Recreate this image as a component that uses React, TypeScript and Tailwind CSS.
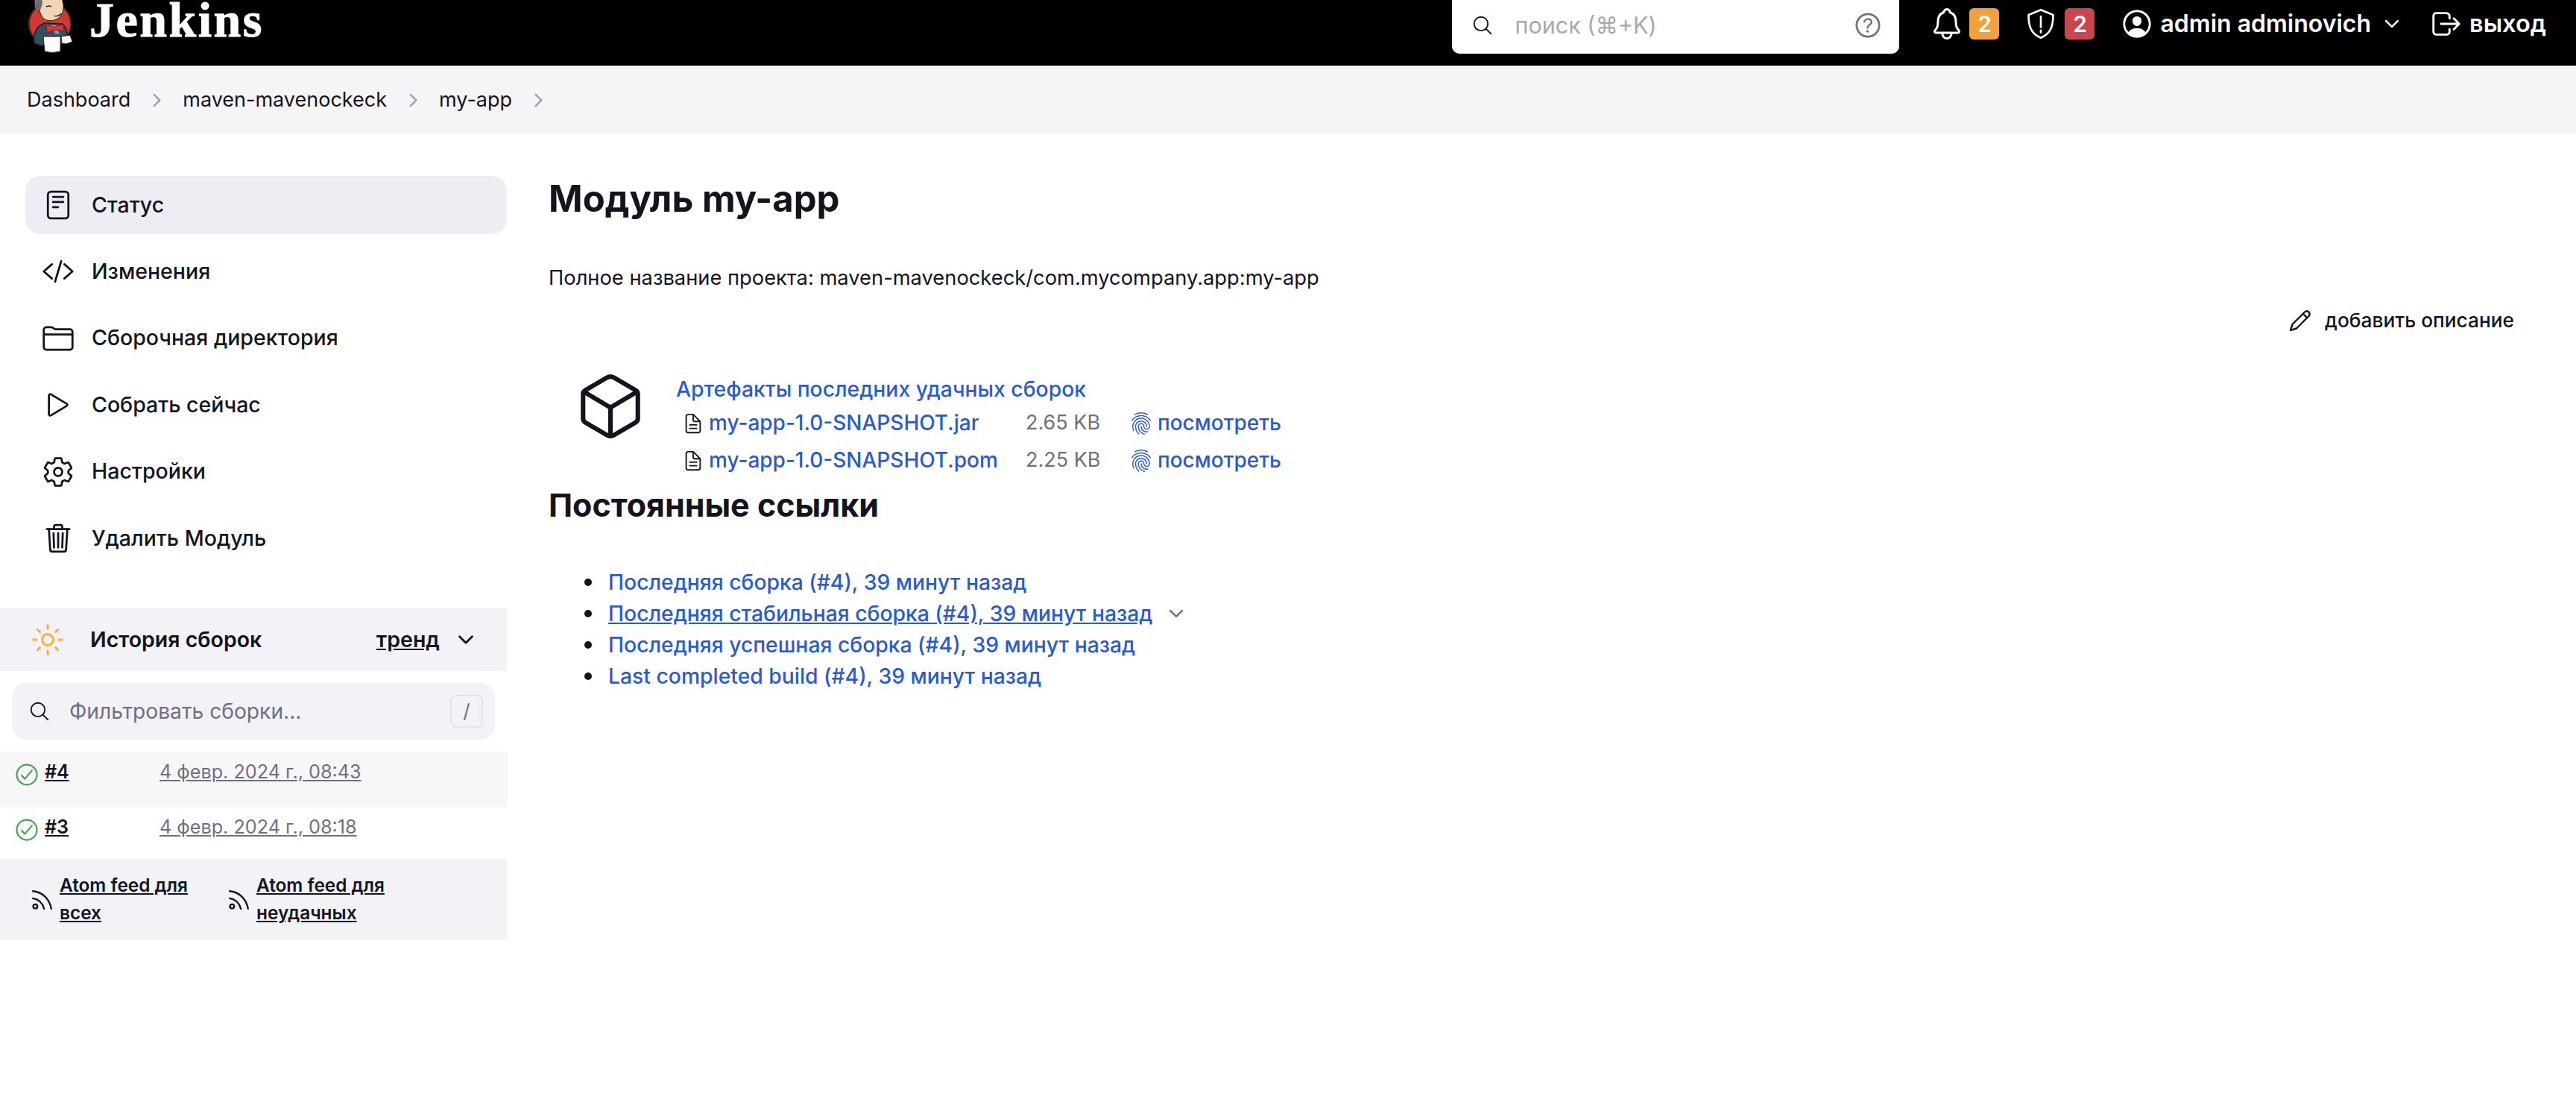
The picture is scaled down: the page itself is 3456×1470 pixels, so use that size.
import type { ReactNode } from 'react'
import {
  IoChevronDown,
  IoChevronForward,
  IoCheckmarkCircleOutline,
  IoCodeSlashOutline,
  IoCubeOutline,
  IoDocumentTextOutline,
  IoFingerPrintOutline,
  IoFolderOutline,
  IoHelpCircleOutline,
  IoLogOutOutline,
  IoNotificationsOutline,
  IoPersonCircleOutline,
  IoPlayOutline,
  IoReaderOutline,
  IoSearchOutline,
  IoSettingsOutline,
  IoSunnyOutline,
  IoTrashOutline,
} from 'react-icons/io5'

function JenkinsLogo() {
  return (
    <svg viewBox="0 0 70 88" className="h-[88px] w-[70px] shrink-0">
      <circle cx="33" cy="32" r="28" fill="#d33833" stroke="#49312d" strokeWidth="2" />
      <path d="M12 58c-2-14 4-24 14-27l24 1c6 6 7 14 6 21l-10 8H20z" fill="#335061" stroke="#231f20" strokeWidth="1.5" />
      <path d="M33 34l9 12 5-11z" fill="#fff" />
      <path d="M40 46l-2-6 5-1 3 6z" fill="#6d9dc5" />
      <path d="M13 6c-2-6 2-10 6-12h26c8 6 8 22 1 29-5 5-14 6-20 3-4-3-6-8-7-12-4 0-6-4-6-8z" fill="#f0d6b7" stroke="#231f20" strokeWidth="1" />
      <path d="M13 10c-2-8 3-14 8-16l2 10-3 10c-3 0-6-1-7-4z" fill="#6d6b6d" />
      <path d="M28 9q4-2 7 0M38 21q6 2 10-3" fill="none" stroke="#231f20" strokeWidth="1.3" />
      <path d="M28 33l11 3 12-3 1 9-12-2-11 4z" fill="#d33833" stroke="#7a1f1c" strokeWidth="1" />
      <path d="M24 49h23v20q-11 3-21 0z" fill="#fff" stroke="#231f20" strokeWidth="1" />
      <path d="M48 49l12-2 3 9-8 3-6-1z" fill="#f4f4f4" stroke="#231f20" strokeWidth="1" />
    </svg>
  )
}

function ShieldAlertIcon() {
  return (
    <svg viewBox="0 0 40 40" className="h-[44px] w-[44px]" fill="none" stroke="#fff" strokeWidth="2.4">
      <path d="M20 3l15 6c0 14-3 23-15 28C8 32 5 23 5 9z" strokeLinejoin="round" />
      <path d="M20 11v13M20 28v2.5" strokeLinecap="round" />
    </svg>
  )
}

function PencilIcon() {
  return (
    <svg viewBox="0 0 32 32" className="h-[32px] w-[32px]" fill="none" stroke="#14141f" strokeWidth="2.4" strokeLinejoin="round">
      <path d="M3 29l2.5-8L22 4.5c1.7-1.7 4-1.7 5.5 0s1.500 3.800 0 5.500L11 26.500z" />
      <path d="M20 7l5.500 5.500" />
    </svg>
  )
}

function RssIcon() {
  return (
    <svg viewBox="0 0 28 28" className="h-[30px] w-[30px] shrink-0" fill="none" stroke="#14141f" strokeWidth="2.2" strokeLinecap="round">
      <path d="M2 4c12 1 21 10 23 22M2 13c7 1 12 6 14 13" />
      <circle cx="5" cy="23" r="2.6" />
    </svg>
  )
}

function TopBar() {
  return (
    <header className="flex h-[88px] items-start overflow-hidden bg-black text-white">
      <div className="ml-[34px]"><JenkinsLogo /></div>
      <span className="ml-[16px] font-['Liberation_Serif',serif] text-[66px] leading-[54px] font-bold tracking-[2.5px] [-webkit-text-stroke:1px_white]">Jenkins</span>

      <div className="ml-auto flex h-[72px] w-[600px] items-center rounded-b-[10px] bg-white pr-[20px] pb-[4px] pl-[26px]">
        <IoSearchOutline className="h-[30px] w-[30px] text-[#14141f]" />
        <span className="ml-[28px] text-[30.500px] text-[#aaaaaa]">поиск (⌘+K)</span>
        <IoHelpCircleOutline className="ml-auto h-[44px] w-[44px] text-[#6f6f85]" />
      </div>

      <div className="ml-[40px] flex h-[64px] items-center">
        <IoNotificationsOutline className="h-[48px] w-[48px]" />
        <span className="ml-[6px] flex h-[42px] w-[40px] items-center justify-center rounded-[6px] bg-[#f2a23a] text-[30px] font-semibold">2</span>
        <span className="ml-[34px]"><ShieldAlertIcon /></span>
        <span className="ml-[10px] flex h-[42px] w-[40px] items-center justify-center rounded-[6px] bg-[#cc444c] text-[30px] font-semibold">2</span>
        <IoPersonCircleOutline className="ml-[34px] h-[46px] w-[46px]" />
        <span className="ml-[8px] text-[32px] font-semibold">admin adminovich</span>
        <IoChevronDown className="ml-[14px] h-[28px] w-[28px]" />
        <IoLogOutOutline className="ml-[36px] h-[46px] w-[46px]" />
        <span className="ml-[8px] mr-[40px] text-[32.500px] font-semibold">выход</span>
      </div>
    </header>
  )
}

function Breadcrumbs() {
  const items = ['Dashboard', 'maven-mavenockeck', 'my-app']
  return (
    <nav className="flex h-[91px] items-center bg-[#f5f5f7] pt-[2px] pl-[36px] text-[27px] text-[#14141f]">
      {items.map((item) => (
        <div key={item} className="flex items-center">
          <span>{item}</span>
          <IoChevronForward className="mx-[21.500px] h-[27px] w-[27px] text-[#a3a3b8]" />
        </div>
      ))}
    </nav>
  )
}

function TaskItem({ icon, label, active }: { icon: ReactNode; label: string; active?: boolean }) {
  return (
    <a className={`flex h-[78px] items-center rounded-[20px] pl-[22px] ${active ? 'bg-[#edeef3]' : ''}`}>
      <span className="flex w-[44px] justify-center text-[#14141f]">{icon}</span>
      <span className="ml-[23px] text-[28.500px] font-medium text-[#14141f]">{label}</span>
    </a>
  )
}

function BuildRow({ id, date, shaded }: { id: string; date: string; shaded?: boolean }) {
  return (
    <div className={`flex items-start pt-[11px] pl-[18px] ${shaded ? 'h-[74px] bg-[#f7f7f9]' : 'h-[70px]'}`}>
      <IoCheckmarkCircleOutline className="mt-[2px] h-[36px] w-[36px] text-[#4aa358]" />
      <a className="ml-[6px] w-[154px] text-[25px] leading-[32px] font-semibold text-[#14141f] underline">{id}</a>
      <a className="text-[25.200px] leading-[32px] text-[#6f6f7f] underline">{date}</a>
    </div>
  )
}

function Sidebar() {
  return (
    <aside className="w-[680px] shrink-0 pt-[57px]">
      <div className="ml-[34px] flex flex-col gap-[11.4px]">
        <TaskItem active label="Статус" icon={<IoReaderOutline className="h-[48px] w-[48px]" />} />
        <TaskItem label="Изменения" icon={<IoCodeSlashOutline className="h-[46px] w-[46px]" />} />
        <TaskItem label="Сборочная директория" icon={<IoFolderOutline className="h-[50px] w-[50px]" />} />
        <TaskItem label="Собрать сейчас" icon={<IoPlayOutline className="h-[46px] w-[46px]" />} />
        <TaskItem label="Настройки" icon={<IoSettingsOutline className="h-[46px] w-[46px]" />} />
        <TaskItem label="Удалить Модуль" icon={<IoTrashOutline className="h-[48px] w-[48px]" />} />
      </div>

      <div className="mt-[55px] flex h-[84px] items-center bg-[#f2f2f7] pl-[40px]">
        <IoSunnyOutline className="h-[48px] w-[48px] text-[#f8b13c]" />
        <span className="ml-[33px] text-[28.500px] font-semibold text-[#14141f]">История сборок</span>
        <a className="ml-auto text-[28.500px] font-semibold text-[#14141f] underline">тренд</a>
        <IoChevronDown className="mr-[40px] ml-[20px] h-[30px] w-[30px] text-[#14141f]" />
      </div>

      <div className="mx-[16px] mt-[16px] flex h-[76px] items-center rounded-[20px] bg-[#f2f2f7] pr-[16px] pl-[22px]">
        <IoSearchOutline className="h-[30px] w-[30px] text-[#14141f]" />
        <span className="ml-[25px] text-[28.200px] text-[#6f6f85]">Фильтровать сборки...</span>
        <span className="ml-auto flex h-[44px] w-[44px] items-center justify-center rounded-[8px] border-2 border-[#e4e4ec] text-[26px] text-[#6f6f85]">/</span>
      </div>

      <div className="mt-[16px]">
        <BuildRow shaded id="#4" date="4 февр. 2024 г., 08:43" />
        <BuildRow id="#3" date="4 февр. 2024 г., 08:18" />
      </div>

      <div className="flex h-[108px] items-center bg-[#f2f2f7] pl-[42px]">
        <div className="flex w-[264px] items-center">
          <RssIcon />
          <a className="ml-[8px] w-[190px] text-[24.400px] leading-[37px] font-semibold text-[#14141f] underline">Atom feed для всех</a>
        </div>
        <div className="flex items-center">
          <RssIcon />
          <a className="ml-[8px] w-[190px] text-[24.400px] leading-[37px] font-semibold text-[#14141f] underline">Atom feed для неудачных</a>
        </div>
      </div>
    </aside>
  )
}

const artifacts = [
  { name: 'my-app-1.0-SNAPSHOT.jar', size: '2.65 KB' },
  { name: 'my-app-1.0-SNAPSHOT.pom', size: '2.25 KB' },
]

const permalinks = [
  'Последняя сборка (#4), 39 минут назад',
  'Последняя стабильная сборка (#4), 39 минут назад',
  'Последняя успешная сборка (#4), 39 минут назад',
  'Last completed build (#4), 39 минут назад',
]

function Main() {
  return (
    <main className="flex-1 pt-[58px] pr-[83px] pl-[56px] text-[#14141f]">
      <h1 className="text-[49px] leading-[60px] font-bold">Модуль my-app</h1>
      <p className="mt-[56px] text-[27.300px] leading-[40px]">Полное название проекта: maven-mavenockeck/com.mycompany.app:my-app</p>

      <div className="mt-[17px] flex h-[40px] items-center justify-end">
        <PencilIcon />
        <span className="ml-[17px] text-[26.300px] font-medium">добавить описание</span>
      </div>

      <div className="mt-[52px] flex">
        <IoCubeOutline className="mt-[-6px] ml-[34px] h-[98px] w-[98px]" />
        <div className="ml-[39px]">
          <a className="block text-[28.300px] leading-[40px] font-medium text-[#2a5bce]">Артефакты последних удачных сборок</a>
          <div className="grid grid-cols-[44px_425px_139px_38px_auto]">
            {artifacts.map((file) => (
              <div key={file.name} className="contents">
                <div className="flex h-[50px] items-center pt-[2px] pl-[8px]"><IoDocumentTextOutline className="h-[30px] w-[30px]" /></div>
                <a className="h-[50px] text-[28px] leading-[50px] font-medium text-[#2a5bce]">{file.name}</a>
                <span className="h-[50px] text-[27px] leading-[50px] text-[#6f6f7f]">{file.size}</span>
                <div className="flex h-[50px] items-center pt-[2px]"><IoFingerPrintOutline className="h-[32px] w-[32px] text-[#2a5bce]" /></div>
                <a className="h-[50px] text-[28px] leading-[50px] font-medium text-[#2a5bce]">посмотреть</a>
              </div>
            ))}
          </div>
        </div>
      </div>

      <h2 className="mt-[5px] text-[43px] leading-[60px] font-bold">Постоянные ссылки</h2>

      <ul className="mt-[53px] ml-[48px]">
        {permalinks.map((link, i) => (
          <li key={link} className="flex h-[42px] items-center text-[28.300px] leading-[42px] font-medium text-[#2a5bce]">
            <span className="mr-[22px] h-[10px] w-[10px] rounded-full bg-[#14141f]" />
            <a className={i === 1 ? 'underline' : ''}>{link}</a>
            {i === 1 && <IoChevronDown className="ml-[18px] h-[28px] w-[28px] text-[#6f6f85]" />}
          </li>
        ))}
      </ul>
    </main>
  )
}

export default function App() {
  return (
    <div className="min-h-[1470px] bg-white font-['Inter',sans-serif]">
      <TopBar />
      <Breadcrumbs />
      <div className="flex">
        <Sidebar />
        <Main />
      </div>
    </div>
  )
}
